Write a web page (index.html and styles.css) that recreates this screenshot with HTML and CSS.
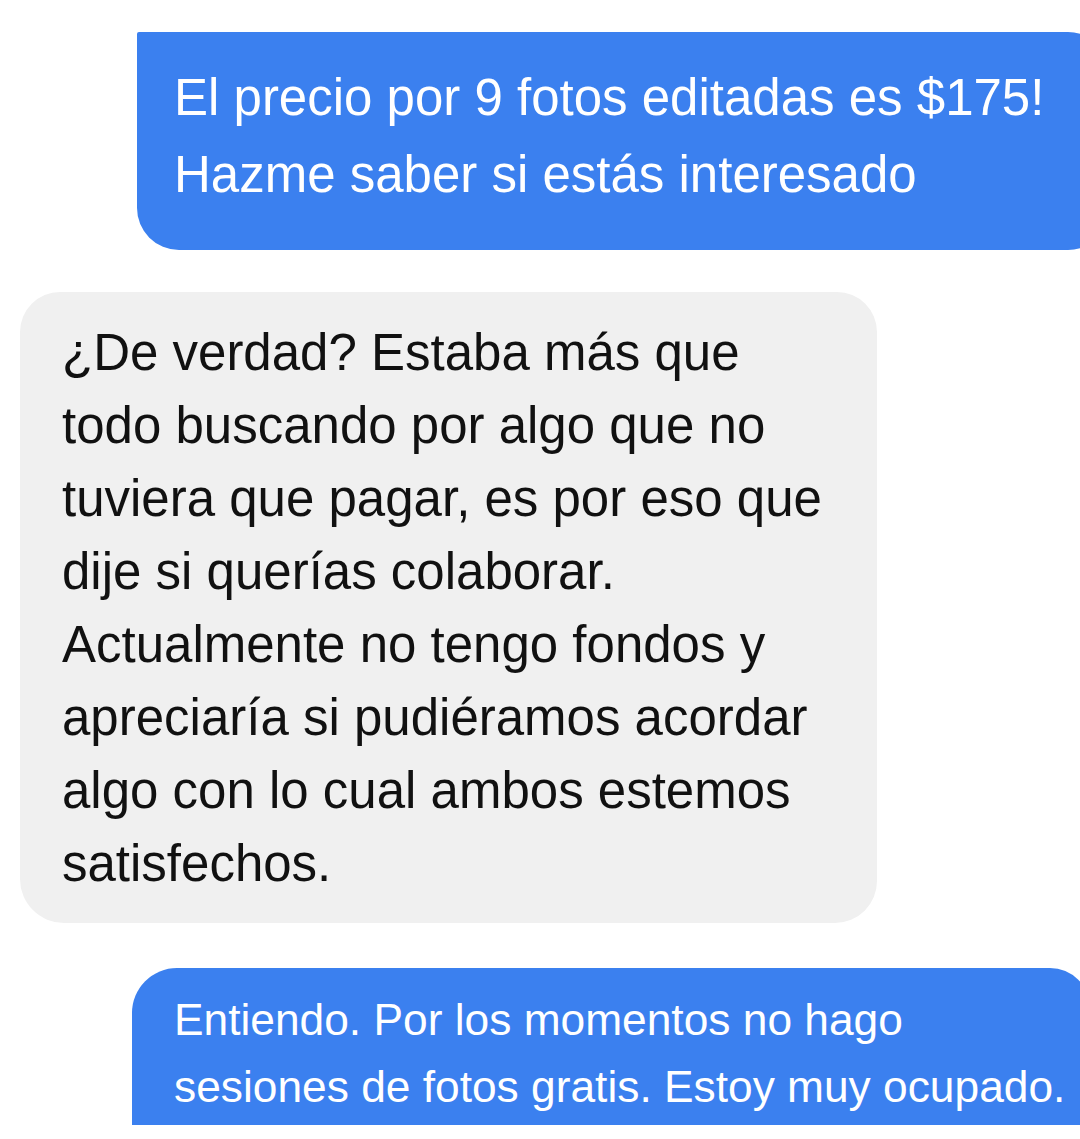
FILE: index.html
```html
<!DOCTYPE html>
<html lang="es">
<head>
<meta charset="utf-8">
<title>Chat</title>
<link rel="stylesheet" href="styles.css">
</head>
<body>
<main class="chat">
  <div class="bubble sent first">
    <p>El precio por 9 fotos editadas es $175!<br>Hazme saber si estás interesado</p>
  </div>
  <div class="bubble received">
    <p>¿De verdad? Estaba más que<br>todo buscando por algo que no<br>tuviera que pagar, es por eso que<br>dije si querías colaborar.<br>Actualmente no tengo fondos y<br>apreciaría si pudiéramos acordar<br>algo con lo cual ambos estemos<br>satisfechos.</p>
  </div>
  <div class="bubble sent last">
    <p>Entiendo. Por los momentos no hago<br>sesiones de fotos gratis. Estoy muy ocupado.</p>
  </div>
</main>
</body>
</html>
```

FILE: styles.css
```css
html, body {
  margin: 0;
  padding: 0;
  background: #ffffff;
  overflow: hidden;
}

body {
  width: 1080px;
  height: 1139px;
  font-family: "Liberation Sans", Arial, sans-serif;
}

.chat {
  display: flex;
  flex-direction: column;
  align-items: flex-start;
  padding-top: 32px;
}

.bubble p {
  margin: 0;
  white-space: nowrap;
}

.sent {
  background: #3b80ef;
  color: #ffffff;
  flex-shrink: 0;
}

.first {
  margin-left: 137px;
  width: 936px;
  padding: 27px 0 37px 37px;
  border-radius: 2px 42px 42px 42px;
  font-size: 51px;
  line-height: 77px;
}

.received {
  margin-top: 42px;
  margin-left: 20px;
  width: 815px;
  padding: 24px 0 23px 42px;
  background: #f0f0f0;
  color: #111111;
  border-radius: 40px 40px 42px 44px;
  font-size: 51px;
  line-height: 73px;
}

.last {
  margin-top: 45px;
  margin-left: 132px;
  width: 916px;
  padding: 18px 0 5px 42px;
  border-radius: 45px 40px 0 0;
  font-size: 44.3px;
  line-height: 67px;
}
```
